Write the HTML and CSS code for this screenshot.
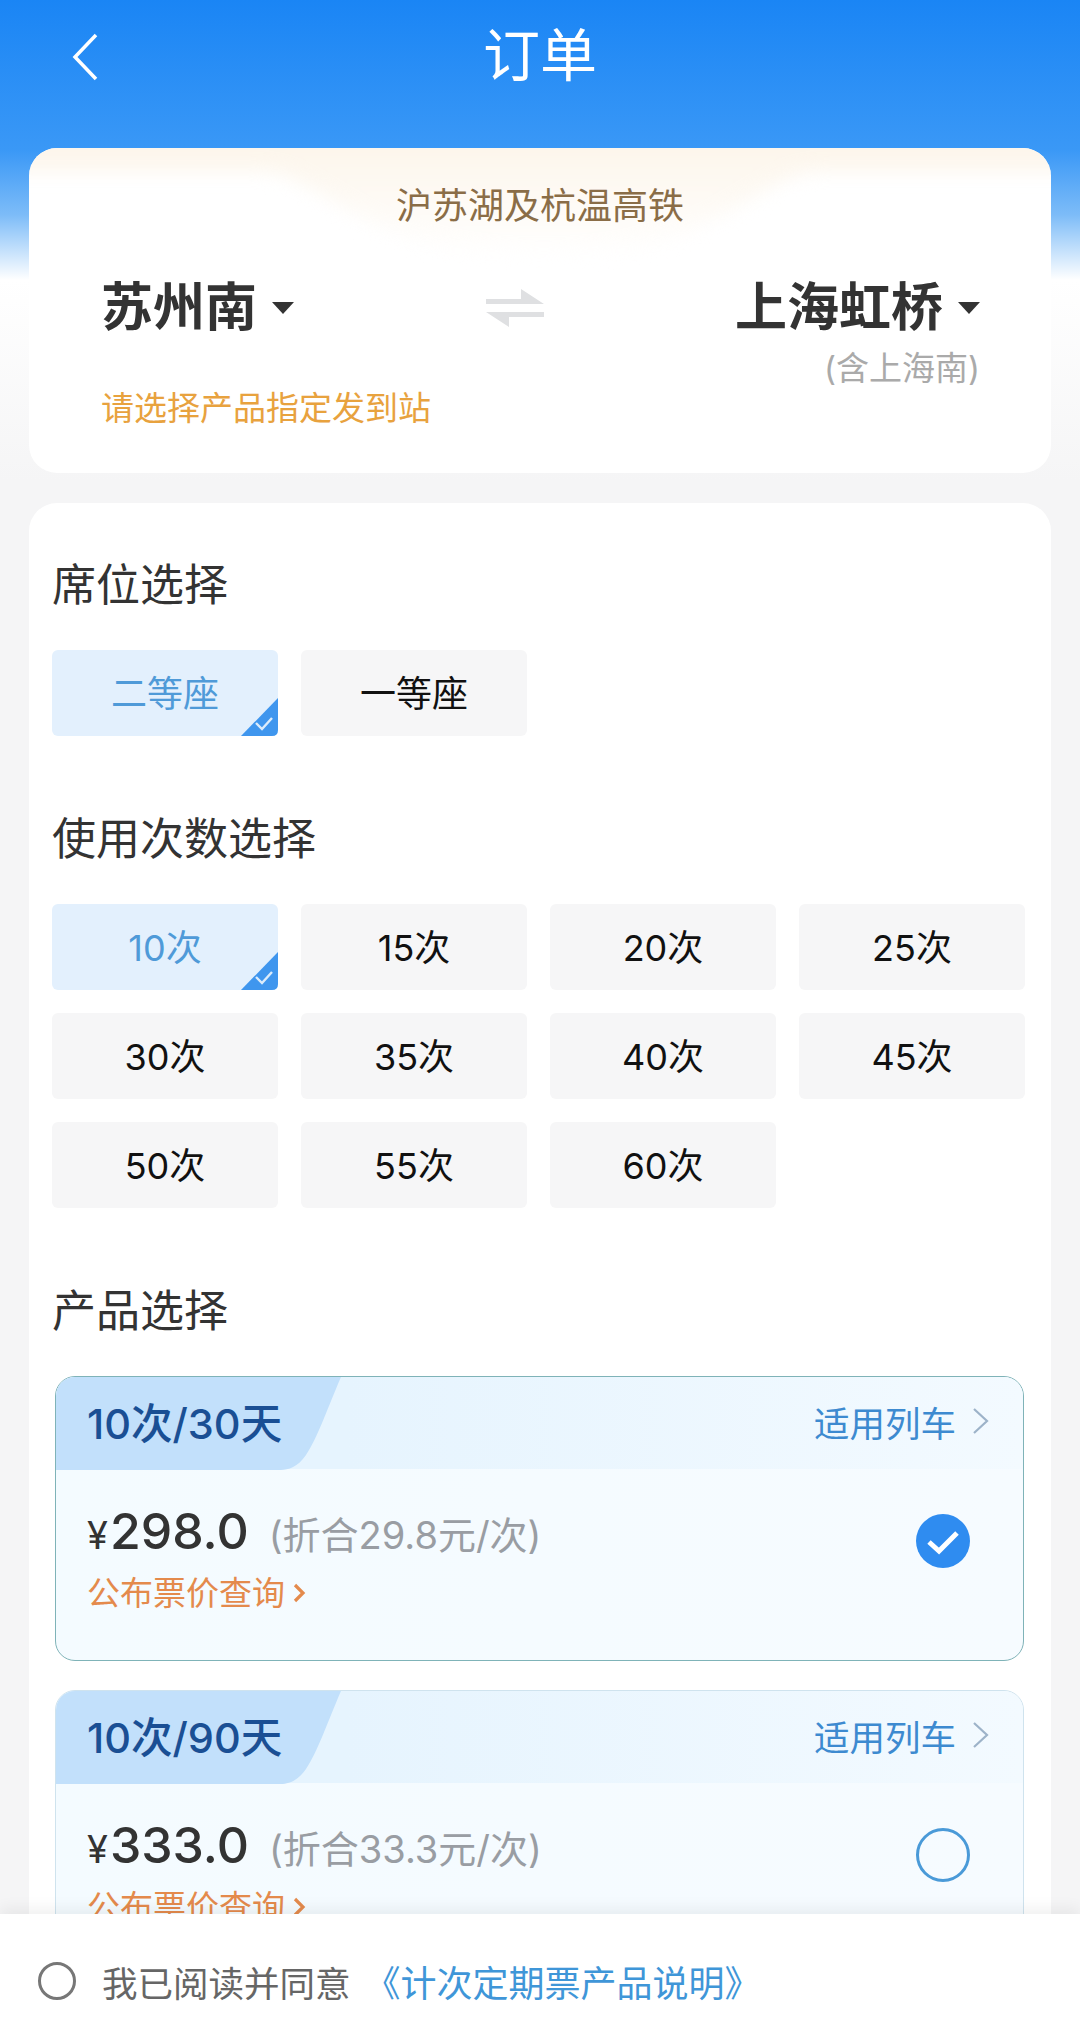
FILE: index.html
```html
<!DOCTYPE html>
<html lang="zh-CN">
<head>
    <meta charset="UTF-8">
    <meta name="viewport" content="width=device-width, initial-scale=1.0">
    <title>订单</title>
    <link rel="stylesheet" href="styles.css">
</head>
<body>
    <div class="page">
        <header class="topbar">
            <svg class="back" width="26" height="48" viewBox="0 0 26 48"><path d="M24 2 3 24l21 22" fill="none" stroke="#fff" stroke-width="3.5"/></svg>
            <h1>订单</h1>
        </header>

        <section class="card route-card">
            <svg class="route-glow" width="1022" height="110" viewBox="0 0 1022 110">
                <defs>
                    <linearGradient id="glow" x1="0" y1="0" x2="0" y2="1">
                        <stop offset="0" stop-color="#fcf4e8"/>
                        <stop offset="1" stop-color="#fff"/>
                    </linearGradient>
                </defs>
                <path d="M-20-20H1042V24H790C730 24 690 110 511 110S292 24 232 24H-20Z" fill="url(#glow)"/>
            </svg>
            <div class="route-name">沪苏湖及杭温高铁</div>
            <div class="route">
                <div class="stop stop-from">
                    <div class="station">苏州南<span class="caret"></span></div>
                    <div class="route-note">请选择产品指定发到站</div>
                </div>
                <svg class="swap" width="60" height="38" viewBox="0 0 60 38">
                    <path d="M1 15H59L36 0V10H1Z M59 23H1L24 38V28H59Z" fill="#dfe0e2"/>
                </svg>
                <div class="stop stop-to">
                    <div class="station">上海虹桥<span class="caret"></span></div>
                    <div class="station-sub">(含上海南)</div>
                </div>
            </div>
        </section>

        <section class="card options">
            <h2>席位选择</h2>
            <div class="chips">
                <div class="chip active">二等座
                    <svg class="tick" width="37" height="38" viewBox="0 0 37 38"><path d="M37 0V32Q37 38 31 38H0Z" fill="#3f96ee"/><path d="M15 25l6 6 10-11" fill="none" stroke="#dcecfb" stroke-width="2.4"/></svg>
                </div>
                <div class="chip">一等座</div>
            </div>

            <h2>使用次数选择</h2>
            <div class="chips">
                <div class="chip active">10次
                    <svg class="tick" width="37" height="38" viewBox="0 0 37 38"><path d="M37 0V32Q37 38 31 38H0Z" fill="#3f96ee"/><path d="M15 25l6 6 10-11" fill="none" stroke="#dcecfb" stroke-width="2.4"/></svg>
                </div>
                <div class="chip">15次</div>
                <div class="chip">20次</div>
                <div class="chip">25次</div>
                <div class="chip">30次</div>
                <div class="chip">35次</div>
                <div class="chip">40次</div>
                <div class="chip">45次</div>
                <div class="chip">50次</div>
                <div class="chip">55次</div>
                <div class="chip">60次</div>
            </div>

            <h2>产品选择</h2>
            <div class="product selected">
                <div class="product-head">
                    <svg class="product-tab" width="285" height="93" viewBox="0 0 285 93"><path d="M0 0H285C272 30 262 60 250 78 242 90 232 93 225 93H0Z" fill="#c2e0fb"/></svg>
                    <span class="product-name">10次/30天</span>
                    <span class="trains">适用列车
                        <svg width="17" height="28" viewBox="0 0 17 28"><path d="M2 2l13 12L2 26" fill="none" stroke="#9db3c9" stroke-width="2.2"/></svg>
                    </span>
                </div>
                <div class="product-body">
                    <div>
                        <div class="price-line"><span class="yen">¥</span><span class="price">298.0</span><span class="per">(折合29.8元/次)</span></div>
                        <div class="fare-link">公布票价查询
                            <svg width="13" height="22" viewBox="0 0 13 22"><path d="M2 3l8 8-8 8" fill="none" stroke="#e48a4c" stroke-width="3.2"/></svg>
                        </div>
                    </div>
                    <svg class="radio-on" width="54" height="54" viewBox="0 0 54 54"><circle cx="27" cy="27" r="27" fill="#2f8cf0"/><path d="M13 28l10 9 18-18" fill="none" stroke="#fff" stroke-width="5"/></svg>
                </div>
            </div>

            <div class="product">
                <div class="product-head">
                    <svg class="product-tab" width="285" height="93" viewBox="0 0 285 93"><path d="M0 0H285C272 30 262 60 250 78 242 90 232 93 225 93H0Z" fill="#c2e0fb"/></svg>
                    <span class="product-name">10次/90天</span>
                    <span class="trains">适用列车
                        <svg width="17" height="28" viewBox="0 0 17 28"><path d="M2 2l13 12L2 26" fill="none" stroke="#9db3c9" stroke-width="2.2"/></svg>
                    </span>
                </div>
                <div class="product-body">
                    <div>
                        <div class="price-line"><span class="yen">¥</span><span class="price">333.0</span><span class="per">(折合33.3元/次)</span></div>
                        <div class="fare-link">公布票价查询
                            <svg width="13" height="22" viewBox="0 0 13 22"><path d="M2 3l8 8-8 8" fill="none" stroke="#e48a4c" stroke-width="3.2"/></svg>
                        </div>
                    </div>
                    <span class="radio-off"></span>
                </div>
            </div>
        </section>

        <footer class="agree">
            <span class="agree-radio"></span>
            <span class="agree-text">我已阅读并同意</span>
            <span class="agree-link">《计次定期票产品说明》</span>
        </footer>
    </div>
</body>
</html>
```

FILE: styles.css
```css
* {
    box-sizing: border-box;
}
body {
    margin: 0;
    font-family: Inter, "Noto Sans CJK SC", sans-serif;
    background-color: #f5f5f6;
}
h1, h2 {
    margin: 0;
    font-weight: 400;
}
.page {
    position: relative;
    height: 2036px;
    overflow: hidden;
    background: linear-gradient(#1a85f5 0, #3a98f6 150px, #7dbcf8 215px, #fff 280px, #f5f5f6 480px);
}
.topbar {
    display: flex;
    align-items: center;
    justify-content: center;
    position: relative;
    height: 148px;
    padding-bottom: 36px;
}
.topbar h1 {
    font-size: 57px;
    line-height: 70px;
    color: #fff;
}
.back {
    position: absolute;
    left: 72px;
    top: 33px;
}
.card {
    margin: 0 29px;
    border-radius: 28px;
    background-color: #fff;
}

/* route card */
.route-card {
    position: relative;
    height: 325px;
    padding-top: 38px;
    overflow: hidden;
}
.route-glow {
    position: absolute;
    left: 0;
    top: 0;
    overflow: visible;
    filter: blur(9px);
}
.route-name {
    position: relative;
    font-size: 36px;
    line-height: 40px;
    text-align: center;
    color: #8a6d47;
}
.route {
    display: flex;
    justify-content: space-between;
    align-items: flex-start;
    position: relative;
    margin-top: 52px;
    padding: 0 71px 0 72px;
}
.station {
    display: flex;
    align-items: center;
    font-size: 52px;
    line-height: 60px;
    font-weight: 700;
    white-space: nowrap;
    color: #333;
}
.stop-from {
    width: 194px;
}
.caret {
    width: 0;
    height: 0;
    margin-left: 15px;
    border-left: 11.5px solid transparent;
    border-right: 11.5px solid transparent;
    border-top: 12px solid #333;
}
.swap {
    margin-top: 11px;
}
.route-note {
    margin-top: 50px;
    font-size: 33px;
    line-height: 40px;
    white-space: nowrap;
    color: #e8a23e;
}
.station-sub {
    margin-top: 10px;
    font-size: 33px;
    line-height: 40px;
    text-align: right;
    color: #aaa;
}

/* options */
.options {
    margin-top: 30px;
    height: 1600px;
    padding: 52px 23px 0;
}
.options h2 {
    font-size: 44px;
    line-height: 60px;
    color: #333;
}
.chips {
    display: grid;
    grid-template-columns: repeat(4, 226px);
    grid-auto-rows: 86px;
    gap: 23px;
    margin: 35px 0 73px;
}
.chip {
    display: flex;
    align-items: center;
    justify-content: center;
    position: relative;
    padding-bottom: 4px;
    border-radius: 6px;
    background-color: #f6f6f7;
    font-size: 36px;
    color: #111;
}
.chip.active {
    background-color: #e3f0fd;
    color: #4f9ad8;
}
.tick {
    position: absolute;
    right: 0;
    bottom: 0;
}

/* products */
.product {
    position: relative;
    width: 969px;
    height: 285px;
    margin: 35px 0 -6px 3px;
    border: 1px solid #cfe3ee;
    border-radius: 20px;
    overflow: hidden;
    background: linear-gradient(90deg, #f4fbff, #f6fbff);
}
.product.selected {
    border-color: #7fb3b8;
}
.product-tab {
    position: absolute;
    left: 0;
    top: 0;
}
.product-head {
    display: flex;
    align-items: center;
    justify-content: space-between;
    position: relative;
    height: 92px;
    padding: 0 34px 4px 31px;
    background: linear-gradient(90deg, #e6f4fe 30%, #f3faff);
}
.product-name {
    position: relative;
    font-size: 41.5px;
    font-weight: 500;
    color: #1a4f94;
}
.trains {
    display: flex;
    align-items: center;
    gap: 16px;
    font-size: 35.5px;
    color: #3d8ad0;
}
.product-body {
    display: flex;
    align-items: flex-start;
    justify-content: space-between;
    padding: 22px 53px 0 31px;
}
.price-line {
    display: flex;
    align-items: baseline;
    height: 80px;
    line-height: 80px;
}
.yen {
    font-size: 38px;
    color: #333;
}
.price {
    margin-left: 2px;
    font-size: 50px;
    font-weight: 500;
    color: #333;
}
.per {
    margin-left: 20px;
    font-size: 38px;
    color: #999da3;
}
.fare-link {
    display: flex;
    align-items: center;
    gap: 8px;
    font-size: 33px;
    line-height: 44px;
    color: #e48a4c;
}
.radio-on {
    margin-top: 23px;
}
.radio-off {
    width: 54px;
    height: 54px;
    margin-top: 23px;
    border: 3px solid #4a9ad8;
    border-radius: 50%;
}

/* agreement bar sits over the list */
.agree {
    display: flex;
    align-items: center;
    position: absolute;
    left: 0;
    right: 0;
    bottom: 0;
    height: 122px;
    padding: 12px 0 0 38px;
    background-color: #fff;
    box-shadow: 0 -6px 14px rgba(0, 0, 0, .06);
}
.agree-radio {
    width: 38px;
    height: 38px;
    border: 3px solid #777;
    border-radius: 50%;
}
.agree-text {
    margin-left: 26px;
    font-size: 35.5px;
    color: #666;
}
.agree-link {
    margin-left: 14px;
    font-size: 36px;
    color: #3f96d8;
}
```
